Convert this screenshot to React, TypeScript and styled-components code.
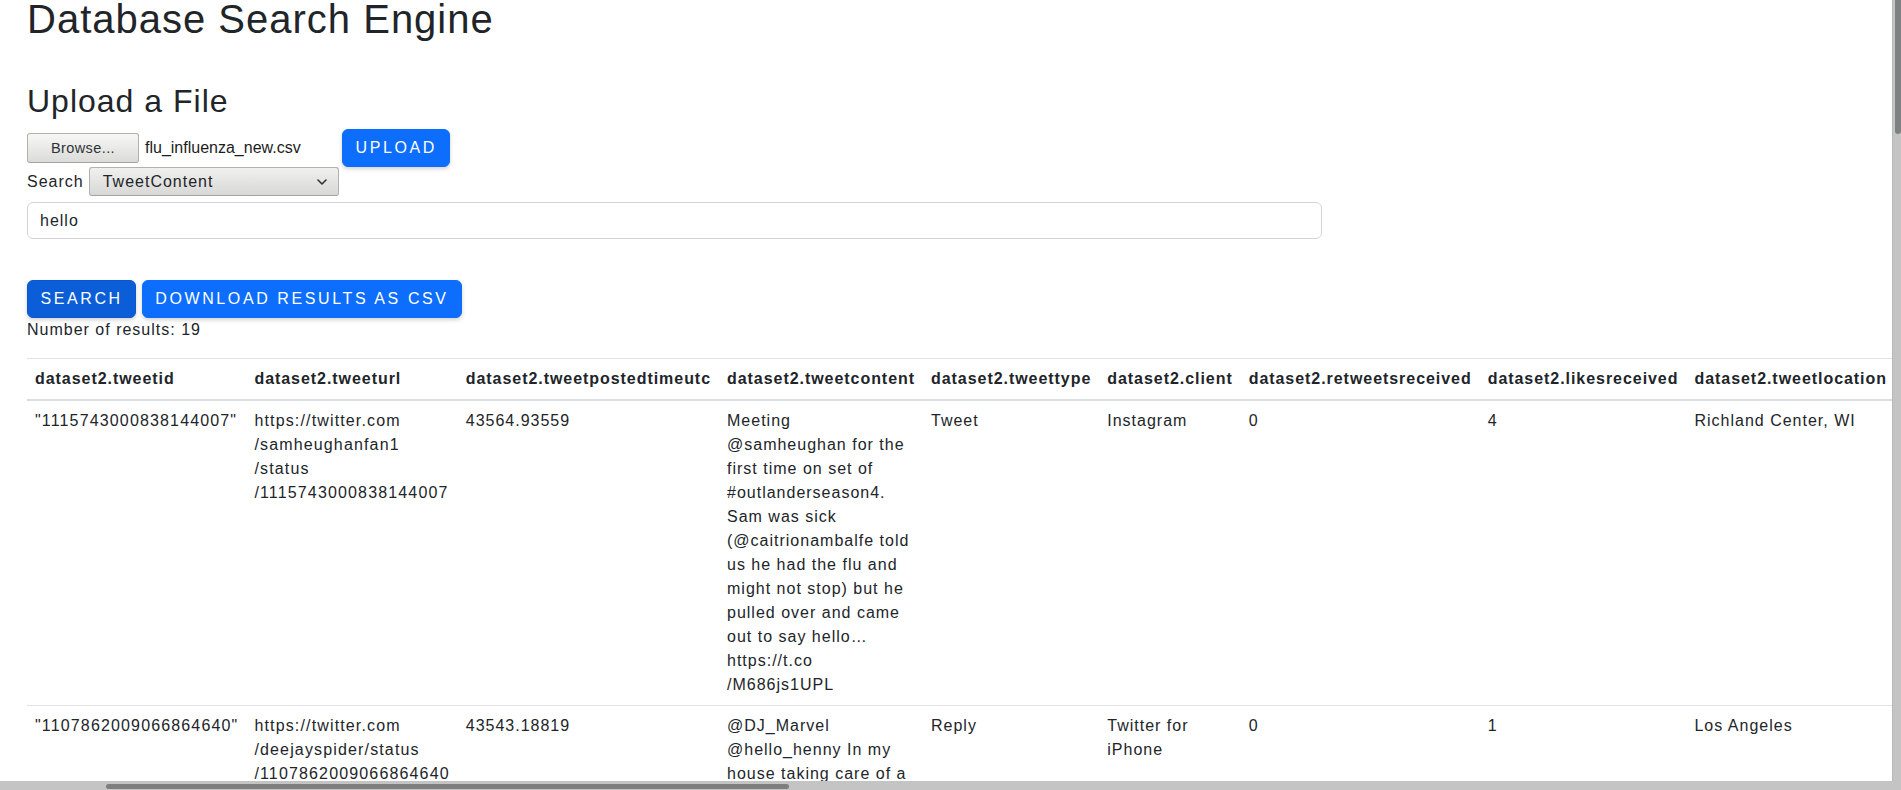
import React from "react";
import styled, { createGlobalStyle } from "styled-components";

const GlobalStyle = createGlobalStyle`
  *, *::before, *::after { box-sizing: border-box; }
  html, body {
    margin: 0;
    padding: 0;
    overflow: hidden;
    background: #ffffff;
  }
  body {
    font-family: "Liberation Sans", Arial, sans-serif;
    font-size: 16px;
    line-height: 1.5;
    color: #212529;
    letter-spacing: 1px;
  }
`;

const Page = styled.main`
  padding: 0 27px;
`;

const Title = styled.h1`
  margin: 0;
  font-size: 40px;
  font-weight: 400;
  line-height: 38px;
`;

const SectionTitle = styled.h2`
  margin: 44px 0 9px;
  font-size: 32px;
  font-weight: 400;
  line-height: 1.2;
`;

const UploadRow = styled.div`
  display: flex;
  align-items: center;
  gap: 4px;
  height: 38px;
`;

const FileInput = styled.div`
  display: flex;
  align-items: center;
  gap: 6px;
  width: 311px;
`;

const BrowseButton = styled.button`
  width: 112px;
  height: 30px;
  padding: 0;
  border: 1px solid #b1b1ae;
  border-bottom-color: #a3a3a0;
  border-radius: 3px;
  background: linear-gradient(to bottom, #f7f7f6, #dbdbd9);
  color: #2e3436;
  font-family: "Liberation Sans", Arial, sans-serif;
  font-size: 14.5px;
  letter-spacing: 0.4px;
`;

const FileName = styled.span`
  letter-spacing: 0;
  white-space: nowrap;
  color: #1c1c1c;
`;

const PrimaryButton = styled.button<{ $pressed?: boolean }>`
  padding: 6px 12.5px;
  border: 1px solid ${(p) => (p.$pressed ? "#0a58ca" : "#0d6efd")};
  border-radius: 6px;
  background: ${(p) => (p.$pressed ? "#0b5ed7" : "#0d6efd")};
  color: #ffffff;
  font-family: "Liberation Sans", Arial, sans-serif;
  font-size: 16px;
  line-height: 24px;
  letter-spacing: 2.6px;
  white-space: nowrap;
  box-shadow: 0 2px 4px rgba(0, 0, 0, 0.18);
`;

const SearchRow = styled.div`
  display: flex;
  align-items: center;
  gap: 5px;
  height: 29px;
`;

const Label = styled.label`
  white-space: nowrap;
`;

const SelectBox = styled.div`
  display: flex;
  align-items: center;
  justify-content: space-between;
  width: 250px;
  height: 29px;
  padding: 0 11px 0 13px;
  border: 1px solid #b1b1ae;
  border-bottom-color: #a3a3a0;
  border-radius: 3px;
  background: linear-gradient(to bottom, #f0f0ef, #d8d8d6);
  color: #212529;
`;

const Chevron = styled.svg`
  width: 10px;
  height: 6px;
  flex: none;
`;

const QueryInput = styled.input`
  display: block;
  width: 1295px;
  height: 37px;
  margin-top: 6px;
  padding: 6px 12px;
  border: 1px solid #d2d5d8;
  border-radius: 6px;
  background: #ffffff;
  color: #212529;
  font-family: inherit;
  font-size: 16px;
  letter-spacing: inherit;
  outline: none;
`;

const ActionRow = styled.div`
  display: flex;
  gap: 5.5px;
  margin-top: 41px;
`;

const ResultCount = styled.p`
  margin: 0 0 16px;
`;

const Table = styled.table`
  width: min-content;
  border-collapse: separate;
  border-spacing: 0;
`;

const Th = styled.th`
  padding: 8px;
  text-align: left;
  font-weight: 700;
  letter-spacing: 0.95px;
  white-space: nowrap;
  border-top: 1px solid #dee2e6;
  border-bottom: 2px solid #dadee2;
`;

const Td = styled.td<{ $digits?: boolean }>`
  padding: 8px;
  vertical-align: top;
  border-bottom: 1px solid #dee2e6;
  letter-spacing: ${(p) => (p.$digits ? "1.15px" : "1px")};
`;

const NoWrap = styled.span`
  white-space: nowrap;
`;

const VScroll = styled.div`
  position: fixed;
  top: 0;
  right: 0;
  bottom: 9px;
  width: 9px;
  background: #c4c4c4;
  border-left: 1px solid #b8b8b8;
  display: flex;
  justify-content: flex-end;
`;

const VThumb = styled.div`
  width: 6px;
  height: 134px;
  background: #7e8181;
  border-radius: 0 0 3px 3px;
`;

const HScroll = styled.div`
  position: fixed;
  left: 0;
  right: 0;
  bottom: 0;
  height: 9px;
  background: #c4c4c4;
  display: flex;
  align-items: flex-end;
  padding: 0 0 1px 106px;
`;

const HThumb = styled.div`
  width: 683px;
  height: 5px;
  background: #7e7e7e;
  border-radius: 3px;
`;

const UrlText = ({ url }: { url: string }) => {
  const parts = url.split(/(?<=[^/:])(?=\/)/);
  return (
    <>
      {parts.map((p, i) => (
        <React.Fragment key={i}>
          {i > 0 && <wbr />}
          <NoWrap>{p}</NoWrap>
        </React.Fragment>
      ))}
    </>
  );
};

const RichText = ({ text }: { text: string }) => {
  const words = text.split(" ");
  return (
    <>
      {words.map((w, i) => (
        <React.Fragment key={i}>
          {i > 0 && " "}
          {w.startsWith("http") ? <UrlText url={w} /> : w}
        </React.Fragment>
      ))}
    </>
  );
};

const columns = [
  "dataset2.tweetid",
  "dataset2.tweeturl",
  "dataset2.tweetpostedtimeutc",
  "dataset2.tweetcontent",
  "dataset2.tweettype",
  "dataset2.client",
  "dataset2.retweetsreceived",
  "dataset2.likesreceived",
  "dataset2.tweetlocation",
];

const rows = [
  {
    id: "\"1115743000838144007\"",
    url: "https://twitter.com/samheughanfan1/status/1115743000838144007",
    posted: "43564.93559",
    content:
      "Meeting @samheughan for the first time on set of #outlanderseason4. Sam was sick (@caitrionambalfe told us he had the flu and might not stop) but he pulled over and came out to say hello\u2026 https://t.co/M686js1UPL",
    type: "Tweet",
    client: "Instagram",
    retweets: "0",
    likes: "4",
    location: "Richland Center, WI",
  },
  {
    id: "\"1107862009066864640\"",
    url: "https://twitter.com/deejayspider/status/1107862009066864640",
    posted: "43543.18819",
    content: "@DJ_Marvel @hello_henny In my house taking care of a",
    type: "Reply",
    client: "Twitter for iPhone",
    retweets: "0",
    likes: "1",
    location: "Los Angeles",
  },
];

export default function App() {
  return (
    <>
      <GlobalStyle />
      <Page>
        <Title>Database Search Engine</Title>
        <SectionTitle>Upload a File</SectionTitle>
        <UploadRow>
          <FileInput>
            <BrowseButton type="button">Browse...</BrowseButton>
            <FileName>flu_influenza_new.csv</FileName>
          </FileInput>
          <PrimaryButton type="button">UPLOAD</PrimaryButton>
        </UploadRow>
        <SearchRow>
          <Label>Search</Label>
          <SelectBox>
            <span>TweetContent</span>
            <Chevron viewBox="0 0 10 6">
              <path
                d="M1 1 L5 5 L9 1"
                fill="none"
                stroke="#2e3436"
                strokeWidth="1.6"
                strokeLinecap="round"
                strokeLinejoin="round"
              />
            </Chevron>
          </SelectBox>
        </SearchRow>
        <QueryInput defaultValue="hello" />
        <ActionRow>
          <PrimaryButton type="button" $pressed>
            SEARCH
          </PrimaryButton>
          <PrimaryButton type="button">DOWNLOAD RESULTS AS CSV</PrimaryButton>
        </ActionRow>
        <ResultCount>Number of results: 19</ResultCount>
        <Table>
          <thead>
            <tr>
              {columns.map((c) => (
                <Th key={c}>{c}</Th>
              ))}
            </tr>
          </thead>
          <tbody>
            {rows.map((r) => (
              <tr key={r.id}>
                <Td $digits>{r.id}</Td>
                <Td $digits>
                  <UrlText url={r.url} />
                </Td>
                <Td>{r.posted}</Td>
                <Td>
                  <RichText text={r.content} />
                </Td>
                <Td>{r.type}</Td>
                <Td>{r.client}</Td>
                <Td>{r.retweets}</Td>
                <Td>{r.likes}</Td>
                <Td>{r.location}</Td>
              </tr>
            ))}
          </tbody>
        </Table>
      </Page>
      <VScroll>
        <VThumb />
      </VScroll>
      <HScroll>
        <HThumb />
      </HScroll>
    </>
  );
}
